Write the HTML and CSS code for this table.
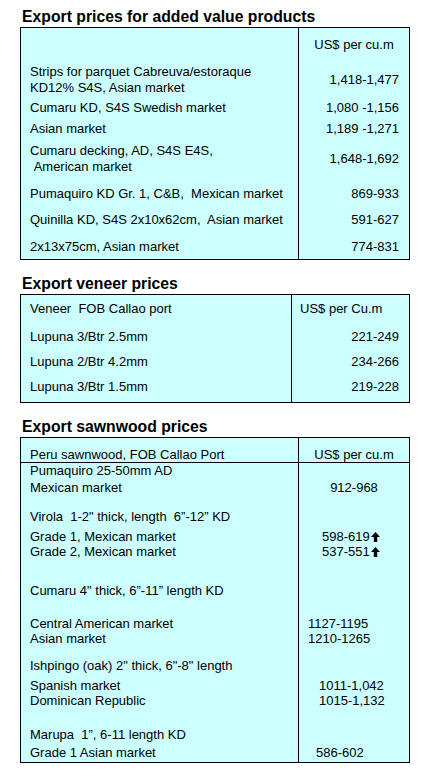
FILE: index.html
```html
<!DOCTYPE html>
<html>
<head>
<meta charset="utf-8">
<link rel="stylesheet" href="styles.css">
</head>
<body>
<div class="page">
  <h2 class="title">Export prices for added value products</h2>
  <div class="tbl t1">
    <div class="row pt9"><div class="l"></div><div class="v c">US$ per cu.m</div></div>
    <div class="row pt11"><div class="l">Strips for parquet Cabreuva/estoraque<br>KD12% S4S, Asian market</div><div class="v">1,418-1,477</div></div>
    <div class="row pt4"><div class="l">Cumaru KD, S4S Swedish market</div><div class="v">1,080 -1,156</div></div>
    <div class="row pt5"><div class="l">Asian market</div><div class="v">1,189 -1,271</div></div>
    <div class="row pt6"><div class="l">Cumaru decking, AD, S4S E4S,<br> American market</div><div class="v">1,648-1,692</div></div>
    <div class="row pt11"><div class="l">Pumaquiro KD Gr. 1, C&amp;B,  Mexican market</div><div class="v">869-933</div></div>
    <div class="row pt10"><div class="l">Quinilla KD, S4S 2x10x62cm,  Asian market</div><div class="v">591-627</div></div>
    <div class="row pt11 pb4"><div class="l">2x13x75cm, Asian market</div><div class="v">774-831</div></div>
  </div>

  <h2 class="title gap">Export veneer prices</h2>
  <div class="tbl t2">
    <div class="row pt6"><div class="l">Veneer  FOB Callao port</div><div class="v lft">US$ per Cu.m</div></div>
    <div class="row pt12"><div class="l">Lupuna 3/Btr 2.5mm</div><div class="v">221-249</div></div>
    <div class="row pt9"><div class="l">Lupuna 2/Btr 4.2mm</div><div class="v">234-266</div></div>
    <div class="row pt9 pb7"><div class="l">Lupuna 3/Btr 1.5mm</div><div class="v">219-228</div></div>
  </div>

  <h2 class="title gap">Export sawnwood prices</h2>
  <div class="tbl t3">
    <div class="row pt9 hd"><div class="l">Peru sawnwood, FOB Callao Port</div><div class="v c">US$ per cu.m</div></div>
    <div class="row"><div class="l">Pumaquiro 25-50mm AD</div><div class="v"></div></div>
    <div class="row pt2"><div class="l">Mexican market</div><div class="v c">912-968</div></div>
    <div class="row pt14"><div class="l">Virola  1-2" thick, length  6”-12” KD</div><div class="v"></div></div>
    <div class="row pt5"><div class="l">Grade 1, Mexican market</div><div class="v lft i23">598-619<svg class="up" width="9" height="10" viewBox="0 0 9 10"><path d="M4.5 0 L9 5 L6.2 5 L6.2 10 L2.8 10 L2.8 5 L0 5 Z"/></svg></div></div>
    <div class="row"><div class="l">Grade 2, Mexican market</div><div class="v lft i23">537-551<svg class="up" width="9" height="10" viewBox="0 0 9 10"><path d="M4.5 0 L9 5 L6.2 5 L6.2 10 L2.8 10 L2.8 5 L0 5 Z"/></svg></div></div>
    <div class="row pt24"><div class="l">Cumaru 4" thick, 6”-11” length KD</div><div class="v"></div></div>
    <div class="row pt18"><div class="l">Central American market</div><div class="v lft i9">1127-1195</div></div>
    <div class="row"><div class="l">Asian market</div><div class="v lft i9">1210-1265</div></div>
    <div class="row pt12"><div class="l">Ishpingo (oak) 2" thick, 6"-8" length</div><div class="v"></div></div>
    <div class="row pt5"><div class="l">Spanish market</div><div class="v lft i20">1011-1,042</div></div>
    <div class="row"><div class="l">Dominican Republic</div><div class="v lft i20">1015-1,132</div></div>
    <div class="row pt19"><div class="l">Marupa  1”, 6-11 length KD</div><div class="v"></div></div>
    <div class="row pt3 pb2"><div class="l">Grade 1 Asian market</div><div class="v lft i17">586-602</div></div>
  </div>
</div>
</body>
</html>
```
FILE: styles.css
```css
html, body {
  margin: 0;
  padding: 0;
  background: #ffffff;
}
body {
  font-family: "Liberation Sans", Arial, sans-serif;
  color: #000000;
}
.page {
  padding: 7px 0 0 20px;
  width: 390px;
}
.title {
  margin: 0;
  padding-left: 2px;
  font-size: 15.75px;
  line-height: 20px;
  font-weight: bold;
  color: #000000;
}
.title.gap {
  margin-top: 14px;
}
.tbl {
  display: grid;
  grid-template-columns: 277px 1fr;
  border: 1px solid #000000;
  background: #ccffff;
  font-size: 13px;
  line-height: 16px;
}
.t2 {
  grid-template-columns: 270px 1fr;
}
.t3 {
  line-height: 15px;
}
.row {
  display: contents;
}
.l {
  padding-left: 9px;
  white-space: pre-wrap;
}
.v {
  border-left: 1px solid #000000;
  padding-right: 10px;
  display: flex;
  align-items: center;
  justify-content: flex-end;
  white-space: pre;
}
.v.c {
  justify-content: center;
  padding-right: 0;
}
.v.lft {
  justify-content: flex-start;
  padding-left: 8px;
  padding-right: 0;
}
.v.i23 { padding-left: 23px; }
.v.i9 { padding-left: 9px; }
.v.i20 { padding-left: 20px; }
.v.i17 { padding-left: 17px; }
.up {
  display: block;
  margin-left: 1px;
  fill: #000000;
}
.row.hd > * {
  border-bottom: 1px solid #000000;
}
.row.pt2 > * { padding-top: 2px; }
.row.pt3 > * { padding-top: 3px; }
.row.pt4 > * { padding-top: 4px; }
.row.pt5 > * { padding-top: 5px; }
.row.pt6 > * { padding-top: 6px; }
.row.pt9 > * { padding-top: 9px; }
.row.pt10 > * { padding-top: 10px; }
.row.pt11 > * { padding-top: 11px; }
.row.pt12 > * { padding-top: 12px; }
.row.pt14 > * { padding-top: 14px; }
.row.pt18 > * { padding-top: 18px; }
.row.pt19 > * { padding-top: 19px; }
.row.pt24 > * { padding-top: 24px; }
.row.pb2 > * { padding-bottom: 2px; }
.row.pb4 > * { padding-bottom: 4px; }
.row.pb7 > * { padding-bottom: 7px; }
```
